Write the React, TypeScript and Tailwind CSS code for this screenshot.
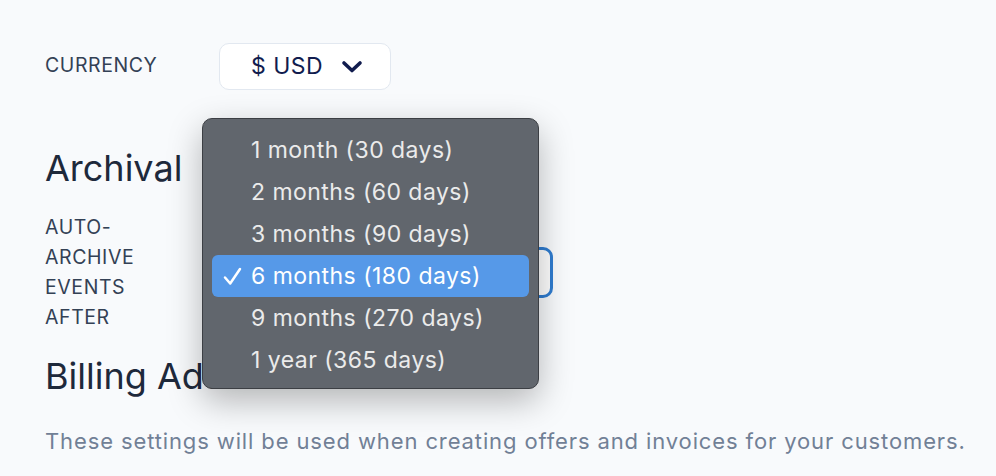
import React from "react";

const options = [
  "1 month (30 days)",
  "2 months (60 days)",
  "3 months (90 days)",
  "6 months (180 days)",
  "9 months (270 days)",
  "1 year (365 days)",
];

export default function App() {
  return (
    <div
      className="relative w-[996px] h-[476px] overflow-hidden bg-[#f8fafc] text-[#1e293b]"
      style={{ fontFamily: "Inter, 'Noto Sans', sans-serif" }}
    >
      <div className="pl-[45px] pt-[43px] flex flex-col">
        {/* Currency row */}
        <div className="flex items-start">
          <div className="w-[174px] pt-[7px] text-[19.5px] leading-[30px] tracking-[0.03em] text-[#334155]">
            CURRENCY
          </div>
          <div className="w-[172px] h-[47px] rounded-[10px] border-[1.5px] border-[#e2e8f0] bg-white flex items-center justify-center gap-[18px] pl-[4px] text-[23px] tracking-[0.02em] text-[#111c4e]">
            <span>$ USD</span>
            <svg width="22" height="14" viewBox="0 0 22 14" fill="none">
              <path d="M3 3l8 7.5 8-7.5" stroke="#111c4e" strokeWidth="3.6" strokeLinecap="round" strokeLinejoin="round" />
            </svg>
          </div>
        </div>

        {/* Archival */}
        <h2 className="mt-[56px] text-[36px] leading-[44px] font-normal text-[#1e293b]">Archival</h2>
        <div className="mt-[22px] flex items-center">
          <div className="w-[120px] mr-[54px] text-[19.5px] leading-[30px] tracking-[0.03em] text-[#334155]">
            AUTO-ARCHIVE EVENTS AFTER
          </div>
          <div className="w-[334px] h-[51px] rounded-[10px] border-[3px] border-[#2f7dd1] bg-white" />
        </div>

        <h2 className="mt-[22px] text-[36px] leading-[44px] font-normal text-[#1e293b]">Billing Address</h2>
        <p className="mt-[28px] text-[22px] leading-[30px] tracking-[0.04em] text-[#718096] whitespace-nowrap">
          These settings will be used when creating offers and invoices for your customers.
        </p>
      </div>

      {/* Native dropdown menu */}
      <div className="absolute left-[202px] top-[118px] w-[337px] h-[271px] rounded-[10px] border border-[#3c3f44] bg-[#61666d] shadow-[0_12px_34px_rgba(0,0,0,0.28)] px-[9px] pt-[10px]">
        {options.map((o, i) => {
          const sel = i === 3;
          return (
            <div
              key={o}
              className={`relative h-[42px] rounded-[6px] flex items-center pl-[39px] text-[23px] tracking-[0.02em] ${
                sel ? "bg-[#5699e8] text-white" : "text-[#ebebeb]"
              }`}
            >
              {sel && (
                <svg className="absolute left-[11px] top-[12px]" width="19" height="19" viewBox="0 0 19 19" fill="none">
                  <path d="M2 10.5l5.2 6L17 2" stroke="white" strokeWidth="2.5" strokeLinecap="round" strokeLinejoin="round" />
                </svg>
              )}
              {o}
            </div>
          );
        })}
      </div>
    </div>
  );
}
